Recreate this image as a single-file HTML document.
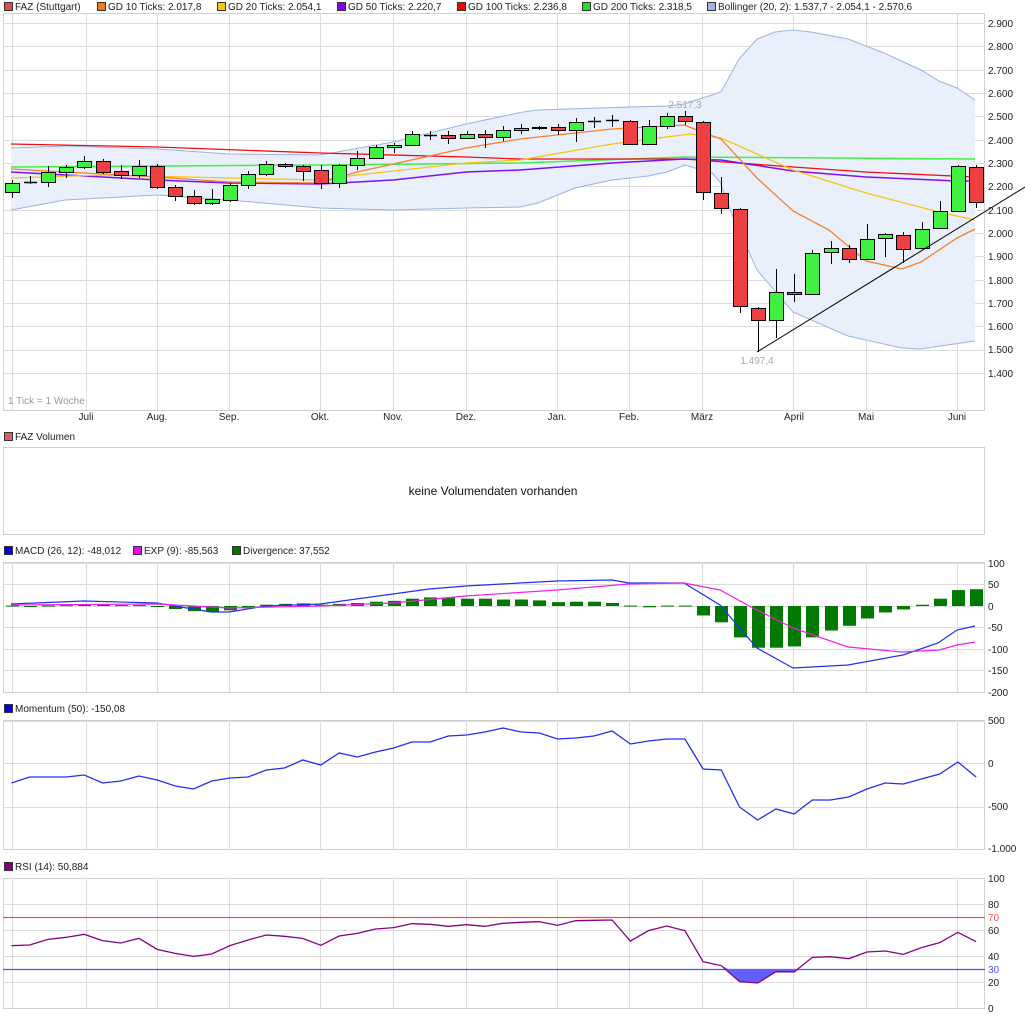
<!DOCTYPE html>
<html><head><meta charset="utf-8"><style>
body{margin:0;background:#fff;width:1025px;height:1018px;overflow:hidden;font-family:"Liberation Sans",Arial,sans-serif;}
svg{position:absolute;left:0;top:0}
text{font-family:"Liberation Sans",Arial,sans-serif;font-size:10px;fill:#222}
</style></head><body>
<svg id="s" width="1025" height="1018" viewBox="0 0 1025 1018">
<g id="bg"></g>
<g id="grid" stroke="#dcdcdc" stroke-width="1" fill="none"></g>
<g id="main"></g>
<!-- legends -->
<g>
<rect x="4.5" y="2.5" width="8" height="8" fill="#e84848" stroke="#333"/><text x="15" y="10">FAZ (Stuttgart)</text>
<rect x="97.5" y="2.5" width="8" height="8" fill="#f87818" stroke="#333"/><text x="108" y="10">GD 10 Ticks: 2.017,8</text>
<rect x="217.5" y="2.5" width="8" height="8" fill="#f8c800" stroke="#333"/><text x="228" y="10">GD 20 Ticks: 2.054,1</text>
<rect x="337.5" y="2.5" width="8" height="8" fill="#8000f8" stroke="#333"/><text x="348" y="10">GD 50 Ticks: 2.220,7</text>
<rect x="457.5" y="2.5" width="8" height="8" fill="#f80000" stroke="#333"/><text x="468" y="10">GD 100 Ticks: 2.236,8</text>
<rect x="582.5" y="2.5" width="8" height="8" fill="#20e020" stroke="#333"/><text x="593" y="10">GD 200 Ticks: 2.318,5</text>
<rect x="707.5" y="2.5" width="8" height="8" fill="#a0b4e0" stroke="#333"/><text x="718" y="10">Bollinger (20, 2): 1.537,7 - 2.054,1 - 2.570,6</text>
<rect x="4.5" y="432.5" width="8" height="8" fill="#e06060" stroke="#333"/><text x="15" y="440">FAZ Volumen</text>
<rect x="4.5" y="546.5" width="8" height="8" fill="#0000f0" stroke="#333"/><text x="15" y="554">MACD (26, 12): -48,012</text>
<rect x="133.5" y="546.5" width="8" height="8" fill="#f000f0" stroke="#333"/><text x="144" y="554">EXP (9): -85,563</text>
<rect x="232.5" y="546.5" width="8" height="8" fill="#007800" stroke="#333"/><text x="243" y="554">Divergence: 37,552</text>
<rect x="4.5" y="704.5" width="8" height="8" fill="#0000f0" stroke="#333"/><text x="15" y="712">Momentum (50): -150,08</text>
<rect x="4.5" y="862.5" width="8" height="8" fill="#800080" stroke="#333"/><text x="15" y="870">RSI (14): 50,884</text>
</g>
<g id="axis">
<text x="988" y="27">2.900</text><text x="988" y="50">2.800</text><text x="988" y="74">2.700</text><text x="988" y="97">2.600</text><text x="988" y="120">2.500</text><text x="988" y="144">2.400</text><text x="988" y="167">2.300</text><text x="988" y="190">2.200</text><text x="988" y="214">2.100</text><text x="988" y="237">2.000</text><text x="988" y="260">1.900</text><text x="988" y="284">1.800</text><text x="988" y="307">1.700</text><text x="988" y="330">1.600</text><text x="988" y="353">1.500</text><text x="988" y="377">1.400</text>
<g text-anchor="middle"><text x="86" y="420">Juli</text><text x="157" y="420">Aug.</text><text x="229" y="420">Sep.</text><text x="320" y="420">Okt.</text><text x="393" y="420">Nov.</text><text x="466" y="420">Dez.</text><text x="557" y="420">Jan.</text><text x="629" y="420">Feb.</text><text x="702" y="420">März</text><text x="794" y="420">April</text><text x="866" y="420">Mai</text><text x="957" y="420">Juni</text></g>
<text x="8" y="404" style="fill:#999">1 Tick = 1 Woche</text>
<text x="493" y="495" text-anchor="middle" style="font-size:12px;fill:#111">keine Volumendaten vorhanden</text>
<text x="988" y="567">100</text><text x="988" y="588">50</text><text x="988" y="610">0</text><text x="988" y="631">-50</text><text x="988" y="653">-100</text><text x="988" y="674">-150</text><text x="988" y="696">-200</text>
<text x="988" y="724">500</text><text x="988" y="767">0</text><text x="988" y="810">-500</text><text x="988" y="852">-1.000</text>
<text x="988" y="882">100</text><text x="988" y="908">80</text><text x="988" y="921" style="fill:#f55">70</text><text x="988" y="934">60</text><text x="988" y="960">40</text><text x="988" y="973" style="fill:#55f">30</text><text x="988" y="986">20</text><text x="988" y="1012">0</text>
</g>
<g id="lab"></g>
</svg>
<script>
var NS="http://www.w3.org/2000/svg";
function el(p,t,a){var e=document.createElementNS(NS,t);for(var k in a)e.setAttribute(k,a[k]);document.getElementById(p).appendChild(e);return e;}
var X=function(k){return 11.5+18.2*k;};
var vx=[12,86,157,229,320,393,466,557,629,702,793,866,957];
function panel(y0,y1,hs){
 el('grid','rect',{x:3.5,y:y0+.5,width:981,height:y1-y0,stroke:'#d0d0d0'});
 vx.forEach(function(x){el('grid','line',{x1:x+.5,y1:y0,x2:x+.5,y2:y1});});
 hs.forEach(function(y){el('grid','line',{x1:3,y1:y+.5,x2:985,y2:y+.5});});
}
var mh=[];for(var i=0;i<16;i++)mh.push(Math.round(23+i*23.33));
panel(13,410,mh);
el('grid','rect',{x:3.5,y:447.5,width:981,height:87,stroke:'#d0d0d0'});
panel(562,692,[563,584,606,627,649,670]);
panel(720,849,[721,763,807]);
panel(878,1008,[904,930,956,982]);
function pl(pts,c,w){el('main','polyline',{points:pts.map(function(p){return p.join(',')}).join(' '),fill:'none',stroke:c,'stroke-width':w||1.3});}
// bollinger
var up=[[11,148],[65,146],[157,149],[229,154],[320,155],[393,142],[466,124],[523,112],[538,110],[629,107],[667,106],[684,104],[721,92],[739,59],[757,39],[775,32],[793,30],[811,32],[848,39],[884,53],[921,70],[939,81],[957,88],[975,100]];
var lo=[[975,341],[920,349],[902,348],[848,336],[793,312],[757,270],[733,217],[720,182],[712,173],[685,165],[667,172],[648,176],[612,180],[575,188],[538,203],[520,207],[466,208],[393,210],[320,208],[229,200],[157,195],[65,200],[11,210]];
el('main','polygon',{points:up.concat(lo).map(function(p){return p.join(',')}).join(' '),fill:'#e9f0fc',stroke:'none'});
pl(up,'#9cb2e2',1);pl(lo.slice().reverse(),'#9cb2e2',1);
pl([[11,167],[320,165],[520,163],[684,157],[975,159]],'#44ee44',1.5);
pl([[11,144],[157,147],[320,153],[466,157],[520,159],[684,159],[793,167],[866,172],[975,177]],'#f01010',1.3);
pl([[11,172],[157,180],[229,183],[320,184],[393,180],[466,172],[520,170],[612,163],[684,159],[721,160],[793,171],[866,177],[957,181],[975,181]],'#8010f0',1.5);
pl([[11,178],[102,175],[229,178],[320,180],[357,175],[466,163],[520,160],[612,144],[690,134],[721,138],[793,170],[866,193],[939,212],[975,220]],'#f8c410',1.3);
pl([[11,169],[157,177],[229,182],[320,183],[357,172],[466,148],[520,139],[612,129],[684,125],[721,139],[757,178],[793,211],[829,230],[866,261],[902,269],[921,262],[957,238],[975,229]],'#f88028',1.3);
var C=[['g',183,192,180,198],['x',182,182,176,184],['g',172,182,166,187],['g',167,172,165,178],['g',161,167,156,169],['r',161,172,159,174],['r',171,175,165,179],['g',166,175,160,178],['r',166,187,164,189],['r',187,196,185,201],['r',196,203,190,205],['g',199,203,189,205],['g',185,200,183,202],['g',174,185,171,189],['g',164,174,161,176],['r',164,166,163,168],['r',166,171,165,181],['r',170,183,165,189],['g',165,183,164,188],['g',158,165,151,170],['g',147,158,145,159],['g',145,147,143,153],['g',134,145,131,146],['x',135,135,131,140],['r',135,138,131,144],['g',134,138,131,139],['r',134,137,130,148],['g',130,137,126,141],['g',128,130,124,134],['g',127,128,126,130],['r',127,130,124,135],['g',122,130,118,142],['x',121,121,117,128],['x',120,120,115,127],['r',121,144,120,145],['g',126,144,120,145],['g',116,126,113,129],['r',116,121,111,125],['r',122,192,121,200],['r',193,208,177,214],['r',209,306,208,313],['r',308,320,307,352],['g',292,320,269,338],['r',292,294,274,302],['g',253,294,250,295],['g',248,252,241,264],['r',248,259,245,263],['g',239,259,224,260],['g',234,238,233,257],['r',235,249,232,263],['g',229,248,222,249],['g',211,228,201,229],['g',166,211,165,212],['r',167,202,165,208]];
C.forEach(function(c,k){var x=Math.round(X(k));
 el('main','line',{x1:x+.5,y1:c[3],x2:x+.5,y2:c[4],stroke:'#000','stroke-width':1});
 if(c[0]=='x'){el('main','line',{x1:x-6,y1:c[1]+.5,x2:x+7,y2:c[1]+.5,stroke:'#000','stroke-width':1.5});}
 else el('main','rect',{x:x-6.5,y:c[1]+.5,width:14,height:Math.max(1,c[2]-c[1]),fill:c[0]=='g'?'#40f040':'#ee4040',stroke:'#000','stroke-width':1});
});
el('main','line',{x1:757,y1:352,x2:1025,y2:187,stroke:'#000','stroke-width':1});
el('main','text',{x:685,y:108,'text-anchor':'middle',style:'fill:#aaa'}).textContent='2.517,3';
el('main','text',{x:757,y:364,'text-anchor':'middle',style:'fill:#aaa'}).textContent='1.497,4';
// MACD
var D=[1,-2,1,2,3,3,2,2,-2,-7,-12,-14,-10,-5,3,5,6,3,5,7,10,12,17,20,20,17,17,15,15,13,9,10,10,7,1,-3,1,1,-22,-38,-73,-97,-97,-94,-73,-57,-46,-29,-15,-8,3,17,37,39];
D.forEach(function(v,k){var x=Math.round(X(k));var h=v*0.43;el('main','rect',{x:x-6,y:h>0?606-h:606,width:13,height:Math.max(1,Math.abs(h)),fill:'#007a00'});});
pl([[11,604],[84,601],[157,603],[211,612],[229,612],[266,606],[320,604],[393,594],[429,589],[466,586],[520,583],[557,581],[612,580],[629,583],[684,583],[720,605],[757,648],[793,668],[848,665],[903,655],[938,643],[957,630],[975,626]],'#2030f0',1.2);
pl([[11,605],[157,604],[229,608],[320,606],[393,603],[466,596],[557,590],[629,584],[684,583],[720,590],[753,608],[793,628],[848,647],[902,652],[939,650],[957,645],[975,642]],'#f020f0',1.2);
// Momentum
var M=[783,777,777,777,775,783,781,776,780,786,789,781,778,777,770,768,760,765,753,757,752,748,742,742,736,735,732,728,732,733,739,738,736,731,744,741,739,739,769,770,807,820,809,814,800,800,797,789,783,784,779,774,762,777];
pl(M.map(function(y,k){return [X(k),y]}),'#2030f0',1.3);
// RSI
el('main','line',{x1:3,y1:917.5,x2:985,y2:917.5,stroke:'#f05050','stroke-width':1.2});
el('main','line',{x1:3,y1:969.5,x2:985,y2:969.5,stroke:'#5050f0','stroke-width':1.2});
var R=[272,270,253,247,238,257,264,250,283,295,304,297,272,255,240,244,250,271,243,235,222,218,206,208,214,209,214,205,202,200,211,197,196,195,258,227,213,227,320,332,380,384,350,351,307,305,311,291,288,298,278,263,232,260].map(function(v){return 855+v/3;});
el('main','polygon',{points:[[728,969],[X(39),R[39]],[X(40),R[40]],[X(41),R[41]],[X(42),R[42]],[X(43),R[43]],[801,969]].map(function(p){return p.join(',')}).join(' '),fill:'#6060f8'});
pl(R.map(function(y,k){return [X(k),y]}),'#880088',1.3);
</script>
</body></html>
